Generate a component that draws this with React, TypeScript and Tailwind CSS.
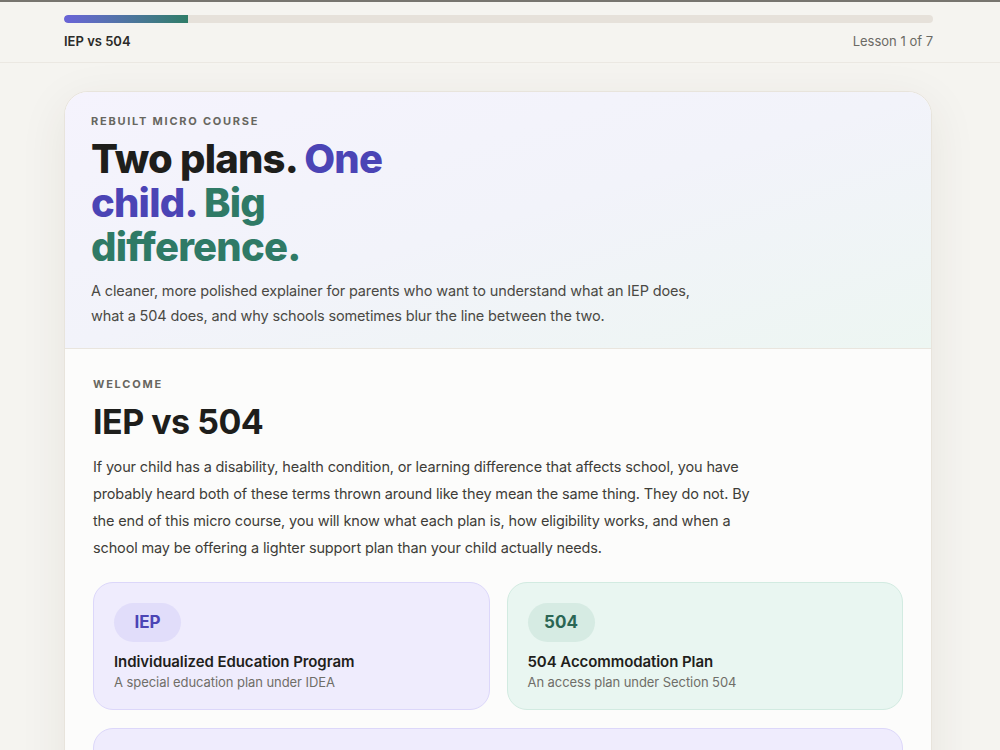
import React from "react";

const lessonCount = 7;
const currentLesson = 1;

function PlanCard({
  badge,
  title,
  subtitle,
  tone,
}: {
  badge: string;
  title: string;
  subtitle: string;
  tone: "iep" | "504";
}) {
  const isIep = tone === "iep";
  return (
    <div
      className={
        isIep
          ? "rounded-[20px] border border-[#dcd7fa] bg-[#efecfd] px-5 pt-5 pb-[18px]"
          : "rounded-[20px] border border-[#d2ebe1] bg-[#e9f6f1] px-5 pt-5 pb-[18px]"
      }
    >
      <div
        className={
          isIep
            ? "inline-flex h-[39px] w-[67px] items-center justify-center rounded-full bg-[#e1ddfa] text-[17px] font-bold text-[#4b44b5]"
            : "inline-flex h-[39px] w-[67px] items-center justify-center rounded-full bg-[#d6ebe3] text-[17px] font-bold text-[#2b6654]"
        }
      >
        {badge}
      </div>
      <div className="mt-[10px] text-[15px] leading-5 font-semibold tracking-[-0.005em] text-[#1f1f1c]">
        {title}
      </div>
      <div className="mt-[1px] text-[13px] leading-[18px] tracking-[-0.005em] text-[#6f6e68]">{subtitle}</div>
    </div>
  );
}

export default function App() {
  return (
    <div
      className="min-h-screen border-t-2 border-[#77756f] bg-[#f5f4f0] text-[#1f1f1c]"
      style={{ fontFamily: "Inter, 'Noto Sans', sans-serif" }}
    >
      <header className="border-b border-[#ebe8e2]">
        <div className="ml-16 w-[869px] pt-[13px] pb-[11px]">
          <div className="h-2 w-full overflow-hidden rounded-full bg-[#e6e1da]">
            <div
              className="h-full rounded-l-full bg-gradient-to-r from-[#6a63d8] to-[#2f7d68]"
              style={{ width: `${(currentLesson / lessonCount) * 100}%` }}
            />
          </div>
          <div className="mt-[8px] flex items-center justify-between text-[13px] leading-5">
            <span className="font-semibold text-[#2b2b28]">IEP vs 504</span>
            <span className="text-[#6b6a64]">
              Lesson {currentLesson} of {lessonCount}
            </span>
          </div>
        </div>
      </header>

      <main className="ml-16 w-[868px] pt-[28px] pb-10">
        <article className="overflow-hidden rounded-[24px] border border-[#e8e4dc] bg-[#fcfcfb] shadow-[0_12px_48px_rgba(60,45,20,0.08)]">
          <section className="border-b border-[#e9e5de] bg-gradient-to-br from-[#f5f3fd] via-[#f2f3fa] to-[#edf6f2] px-[26px] pt-[21px] pb-[20px]">
            <div className="text-[11px] leading-4 font-bold tracking-[0.16em] text-[#67665f]">
              REBUILT MICRO COURSE
            </div>
            <h1 className="mt-2 max-w-[340px] text-[40px] leading-[44px] font-extrabold tracking-[-0.02em] text-[#1e1e1b]">
              Two plans. <span className="text-[#4b44b5]">One child.</span>{" "}
              <span className="text-[#2f7a66]">Big difference.</span>
            </h1>
            <p className="mt-[9px] max-w-[620px] text-[14.5px] leading-[25px] tracking-[-0.01em] text-[#4a4944]">
              A cleaner, more polished explainer for parents who want to understand what an IEP does,
              what a 504 does, and why schools sometimes blur the line between the two.
            </p>
          </section>

          <section className="px-[28px] pt-[27px] pb-10">
            <div className="text-[11px] leading-4 font-bold tracking-[0.16em] text-[#67665f]">
              WELCOME
            </div>
            <h2 className="mt-[10px] text-[34px] leading-10 font-bold tracking-[-0.015em] text-[#1e1e1b]">
              IEP vs 504
            </h2>
            <p className="mt-[11px] max-w-[662px] text-[14.5px] leading-[27px] tracking-[-0.01em] text-[#3e3d38]">
              If your child has a disability, health condition, or learning difference that affects school,
              you have probably heard both of these terms thrown around like they mean the same thing. They
              do not. By the end of this micro course, you will know what each plan is, how eligibility
              works, and when a school may be offering a lighter support plan than your child actually
              needs.
            </p>

            <div className="mt-[21px] grid grid-cols-2 gap-[17px]">
              <PlanCard
                tone="iep"
                badge="IEP"
                title="Individualized Education Program"
                subtitle="A special education plan under IDEA"
              />
              <PlanCard
                tone="504"
                badge="504"
                title="504 Accommodation Plan"
                subtitle="An access plan under Section 504"
              />
            </div>

            <div className="mt-[18px] rounded-[20px] border border-[#dcd7fa] bg-[#efecfd] px-5 py-5">
              <div className="text-[15px] leading-6 font-semibold text-[#1f1f1c]">
                The short version
              </div>
              <p className="mt-1 text-[14px] leading-6 text-[#4a4944]">
                An IEP changes what and how your child is taught. A 504 plan changes how your child
                accesses the same instruction everyone else receives.
              </p>
            </div>
          </section>
        </article>
      </main>
    </div>
  );
}
